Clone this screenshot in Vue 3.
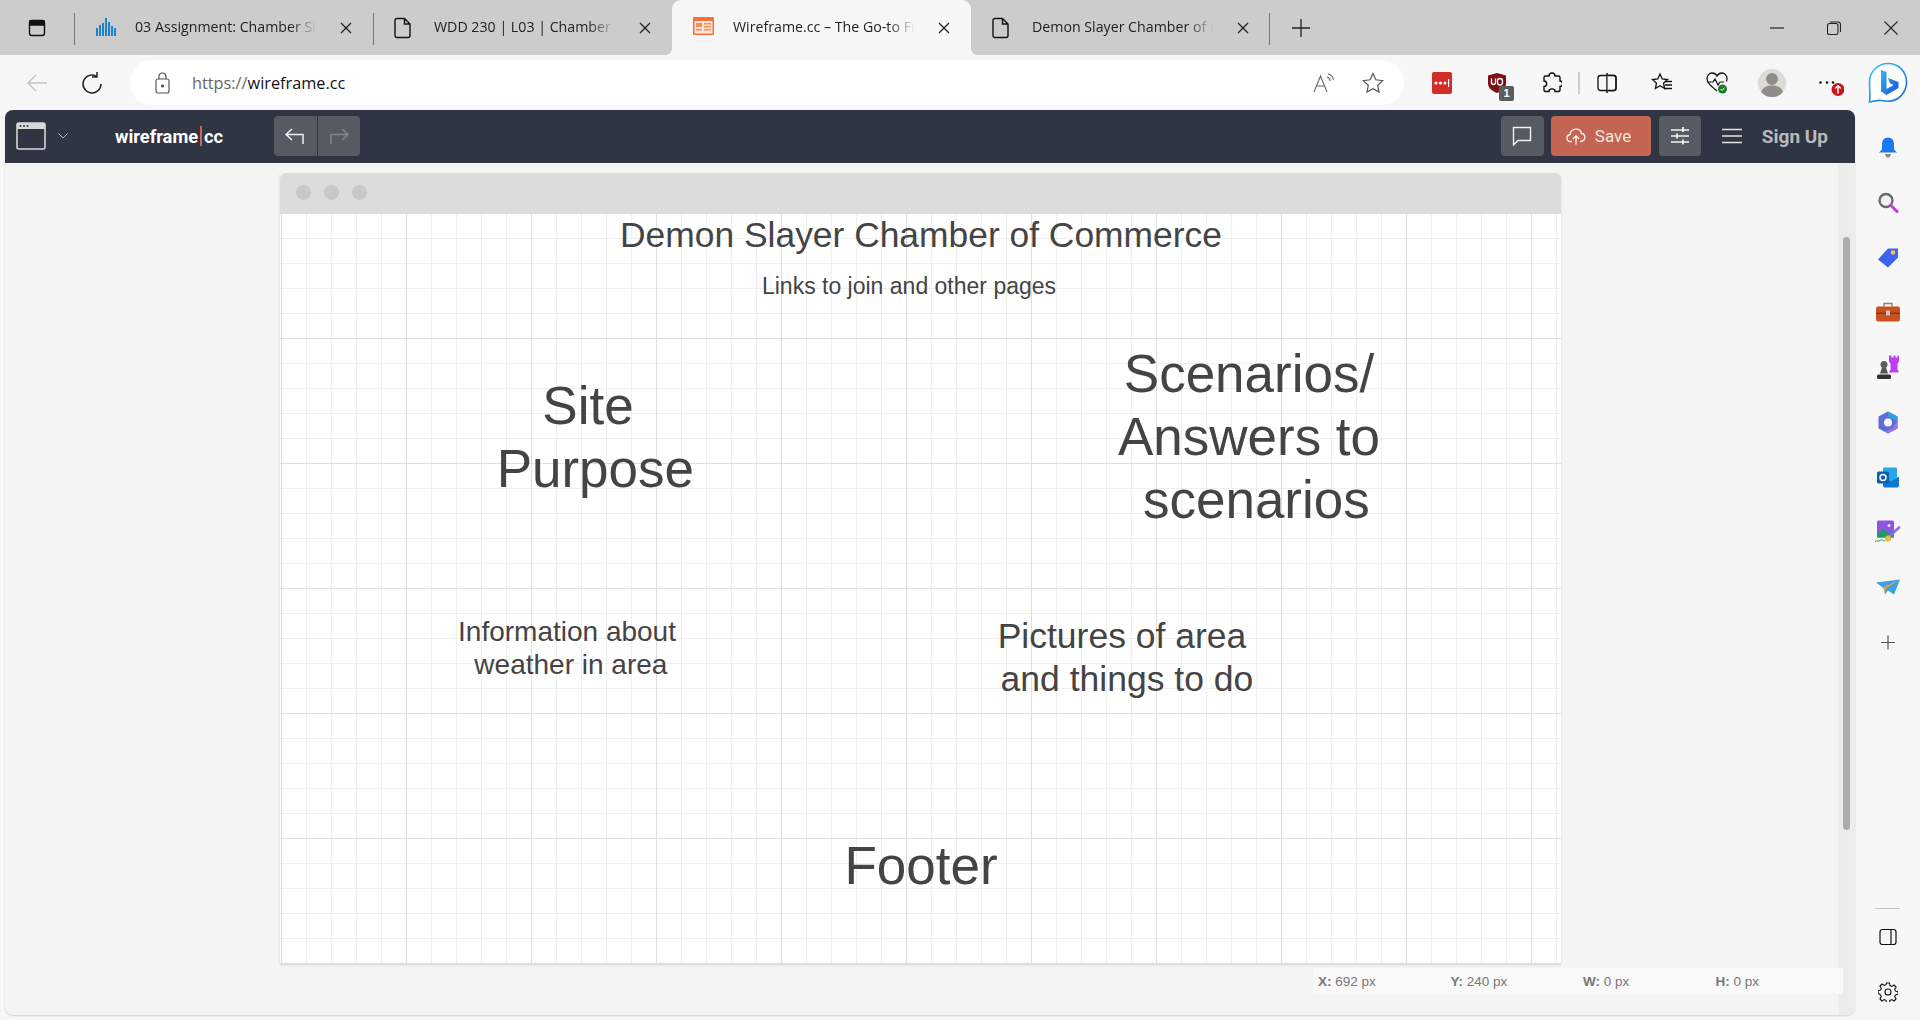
<script setup>
const canvasTexts = [
  { id: 'title', cls: 't-title', lines: ['Demon Slayer Chamber of Commerce'] },
  { id: 'links', cls: 't-links', lines: ['Links to join and other pages'] },
  { id: 'site', cls: 't-site', lines: ['Site', ' Purpose'] },
  { id: 'scen', cls: 't-scen', lines: ['Scenarios/', 'Answers to', ' scenarios'] },
  { id: 'info', cls: 't-info', lines: ['Information about', ' weather in area'] },
  { id: 'pics', cls: 't-pics', lines: ['Pictures of area', ' and things to do'] },
  { id: 'foot', cls: 't-foot', lines: ['Footer'] },
]
const stats = [
  { k: 'X:', v: '692 px' },
  { k: 'Y:', v: '240 px' },
  { k: 'W:', v: '0 px' },
  { k: 'H:', v: '0 px' },
]
</script>

<template>
  <div class="screen">
    <!-- browser tabs -->
    <div class="tabbar">
      <div class="tab-start">
        <svg width="20" height="20" viewBox="0 0 20 20" fill="none" stroke="#111" stroke-width="1.4"><rect x="2.500" y="2.500" width="15" height="15" rx="2.500"/><path d="M3 3h14v4H3z" fill="#111"/></svg>
      </div>
      <div class="tab">
        <svg class="fav" width="22" height="20" viewBox="0 0 22 20" fill="#1a84d0"><path d="M1 11h2v8H1zM4 8h2v11H4zM7 6h2v13H7zM10 1h2v18h-2zM13 5h2v14h-2zM16 9h2v10h-2zM19 11h2v8h-2z"/></svg>
        <span class="tab-text">03 Assignment: Chamber Site Plan</span>
        <svg class="close" width="14" height="14" viewBox="0 0 14 14" stroke="#222" stroke-width="1.3"><path d="M2 2l10 10M12 2L2 12"/></svg>
      </div>
      <div class="tab">
        <svg class="fav" width="18" height="22" viewBox="0 0 18 22" fill="none" stroke="#111" stroke-width="1.4"><path d="M3 1.500h7.500L16 7v11.500a2 2 0 0 1-2 2H3a2 2 0 0 1-2-2v-15a2 2 0 0 1 2-2zM10.500 1.500V7H16"/></svg>
        <span class="tab-text">WDD 230 | L03 | Chamber Site Plan</span>
        <svg class="close" width="14" height="14" viewBox="0 0 14 14" stroke="#222" stroke-width="1.3"><path d="M2 2l10 10M12 2L2 12"/></svg>
      </div>
      <div class="tab active">
        <svg class="fav" width="21" height="18" viewBox="0 0 21 18"><rect width="21" height="18" rx="1" fill="#f4713a"/><rect x="1.500" y="4" width="18" height="12.500" fill="#fde3d6"/><path d="M3 6h6v4H3zM11 6h7v1.500h-7zM11 9h7v1.500h-7zM3 12h6v1.500H3zM11 12h7v1.500h-7z" fill="#f4915f"/></svg>
        <span class="tab-text">Wireframe.cc – The Go-to Free</span>
        <svg class="close" width="14" height="14" viewBox="0 0 14 14" stroke="#222" stroke-width="1.3"><path d="M2 2l10 10M12 2L2 12"/></svg>
      </div>
      <div class="tab last">
        <svg class="fav" width="18" height="22" viewBox="0 0 18 22" fill="none" stroke="#111" stroke-width="1.4"><path d="M3 1.500h7.500L16 7v11.500a2 2 0 0 1-2 2H3a2 2 0 0 1-2-2v-15a2 2 0 0 1 2-2zM10.500 1.500V7H16"/></svg>
        <span class="tab-text">Demon Slayer Chamber of Commerce</span>
        <svg class="close" width="14" height="14" viewBox="0 0 14 14" stroke="#222" stroke-width="1.3"><path d="M2 2l10 10M12 2L2 12"/></svg>
      </div>
      <svg class="newtab" width="18" height="18" viewBox="0 0 18 18" stroke="#222" stroke-width="1.3"><path d="M9 0v18M0 9h18"/></svg>
      <div class="winctl">
        <svg width="14" height="14" viewBox="0 0 14 14" stroke="#222" stroke-width="1.2"><path d="M0 7h14"/></svg>
        <svg width="14" height="14" viewBox="0 0 14 14" fill="none" stroke="#222" stroke-width="1.1"><rect x="0.500" y="2.500" width="10.500" height="11" rx="2"/><path d="M3 1h8a2.500 2.500 0 0 1 2.500 2.500V11"/></svg>
        <svg width="14" height="14" viewBox="0 0 14 14" stroke="#222" stroke-width="1.1"><path d="M0.500 0.500l13 13M13.500 0.500l-13 13"/></svg>
      </div>
    </div>

    <!-- address bar -->
    <div class="toolbar">
      <svg class="t-back" width="22" height="20" viewBox="0 0 22 20" fill="none" stroke="#c4c4c4" stroke-width="1.5"><path d="M21 10H2M10 2l-8 8 8 8"/></svg>
      <svg class="t-reload" width="22" height="24" viewBox="0 0 22 24" fill="none" stroke="#222" stroke-width="1.5"><path d="M16 5.500A9 9 0 1 0 20 13M16 1v5h-5"/></svg>
      <div class="addr">
        <svg width="15" height="22" viewBox="0 0 15 22" fill="none" stroke="#555" stroke-width="1.2"><rect x="1" y="7" width="13" height="14" rx="2"/><path d="M4 7V4.500a3.500 3.500 0 0 1 7 0V7"/><circle cx="7.500" cy="14" r="1" fill="#555"/></svg>
        <span class="url"><span class="url-dim">https://</span>wireframe.cc</span>
        <span class="addr-spacer"></span>
        <svg class="ic-read" width="22" height="20" viewBox="0 0 22 20" fill="none" stroke="#666" stroke-width="1.1"><path d="M1 19L7.500 3 14 19M3.500 13h8M14 4c2 .5 3 2 3.200 4M15 1c3 .6 5 3 5.300 6"/></svg>
        <svg class="ic-star" width="22" height="22" viewBox="0 0 22 22" fill="none" stroke="#555" stroke-width="1.2"><path d="M11 1.500l2.900 6.300 6.800.8-5 4.700 1.300 6.800L11 16.800l-6 3.300 1.300-6.800-5-4.700 6.800-.8z"/></svg>
      </div>
      <div class="ext">
        <span class="ext-slot">
          <svg width="20" height="22" viewBox="0 0 20 22"><rect width="20" height="22" rx="2" fill="#d32d27"/><circle cx="4" cy="11" r="1.600" fill="#fff"/><circle cx="8.500" cy="11" r="1.600" fill="#fff"/><circle cx="13" cy="11" r="1.600" fill="#fff"/><rect x="16" y="7" width="1.200" height="8" fill="#fff"/></svg>
        </span>
        <span class="ext-slot">
          <svg width="18" height="20" viewBox="0 0 18 20"><path d="M9 0l9 2.500v8c0 4.500-4 7.500-9 9.500-5-2-9-5-9-9.500v-8z" fill="#800f14"/><path d="M3.500 5.500v4a2 2 0 0 0 4 0v-4M12 5.500a2.500 2.500 0 0 1 2.500 2.500v1.500a2.500 2.500 0 0 1-5 0V8A2.500 2.500 0 0 1 12 5.500z" fill="none" stroke="#fff" stroke-width="1.300"/></svg>
          <span class="ub-badge">1</span>
        </span>
        <span class="ext-slot">
          <svg width="20" height="22" viewBox="0 0 20 22" fill="none" stroke="#111" stroke-width="1.400"><path d="M7 4c0-4 6-4 6 0h3.500a1.500 1.500 0 0 1 1.500 1.500V9c3.500 0 3.500 5.500 0 5.500V18a1.500 1.500 0 0 1-1.500 1.500H13c0-3.500-6-3.500-6 0H3.500A1.500 1.500 0 0 1 2 18v-3.500c3.500 0 3.500-5.500 0-5.500V5.500A1.500 1.500 0 0 1 3.500 4z"/></svg>
        </span>
        <i class="ext-div"></i>
        <span class="ext-slot">
          <svg width="20" height="22" viewBox="0 0 20 22" fill="none" stroke="#111" stroke-width="1.300"><rect x="1" y="3.500" width="18" height="15" rx="2.500"/><path d="M10 1v20" stroke-width="1.500"/><path d="M10.700 4h6v14h-6z" fill="#f7f7f7" stroke="none"/><path d="M11 3.500h6a2 2 0 0 1 2 2v11a2 2 0 0 1-2 2h-6"/></svg>
        </span>
        <span class="ext-slot">
          <svg width="22" height="22" viewBox="0 0 22 22" fill="none" stroke="#111" stroke-width="1.300"><path d="M9 2l2.200 5 5.300.6-4 3.600 1.100 5.300L9 13.800l-4.600 2.700 1.100-5.300-4-3.600L6.800 7z"/><path d="M14 9.500h7M14 13h7M13 16.500h8"/></svg>
        </span>
        <span class="ext-slot">
          <svg width="22" height="24" viewBox="0 0 22 24" fill="none"><path d="M11 20C5 15 1 12 1 7.500 1 4.500 3.400 2 6 2c2 0 4 1 5 3 1-2 3-3 5-3 2.600 0 5 2.500 5 5.500 0 1-.2 2-.6 3" stroke="#111" stroke-width="1.300"/><path d="M2 11h5l2-3 3 6 2-3h4" stroke="#111" stroke-width="1.200"/><circle cx="16.500" cy="18" r="4.500" fill="#187a2a"/><path d="M14.500 18l1.500 1.500 2.500-2.800" stroke="#fff" stroke-width="1"/></svg>
        </span>
        <span class="ext-slot">
          <svg width="28" height="32" viewBox="0 0 28 32"><circle cx="14" cy="16" r="14" fill="#dcdbd7"/><circle cx="14" cy="12" r="6" fill="#8f8d8a"/><path d="M3 25c2-5 6-6.500 11-6.500S23 20 25 25c-2.500 3-6.500 5-11 5s-8.500-2-11-5z" fill="#8f8d8a"/></svg>
        </span>
        <span class="ext-slot">
          <svg width="34" height="26" viewBox="0 0 34 26"><circle cx="10.500" cy="12.500" r="1.300" fill="#111"/><circle cx="17" cy="12.500" r="1.300" fill="#111"/><circle cx="23" cy="12.500" r="1.300" fill="#111"/><circle cx="28" cy="19.500" r="6.500" fill="#c4161c"/><path d="M28 23.500V16M25.200 18.500L28 15.800l2.800 2.700" fill="none" stroke="#fff" stroke-width="1.400"/></svg>
        </span>
      </div>
      <svg class="bing" width="40" height="42" viewBox="0 0 40 42">
        <defs>
          <linearGradient id="bing-ring" x1="0" y1="0" x2="1" y2="1"><stop offset="0" stop-color="#32c5f0"/><stop offset="1" stop-color="#1a62e0"/></linearGradient>
          <linearGradient id="bing-b" x1="0" y1="0" x2="1" y2="1"><stop offset="0" stop-color="#35b6f2"/><stop offset="1" stop-color="#1c50d8"/></linearGradient>
        </defs>
        <path d="M20 1.500C9.500 1.500 1.500 10 1.500 20c0 7 1 14 0 20 4-1 8-2 12-1.500 2 .5 4 .8 6.500.8 10.500 0 18.500-8.800 18.500-19.300S30.500 1.500 20 1.500z" fill="#fff" stroke="url(#bing-ring)" stroke-width="1.600"/>
        <path d="M13 8l5.500 2v17l7-4-3.500-1.800-2-5.200 10.500 4v6L18.500 33 13 29.500z" fill="url(#bing-b)"/>
      </svg>
    </div>

    <div class="main">
      <div class="app">
        <!-- wireframe.cc header -->
        <header class="hdr">
          <svg class="hdr-logo" width="30" height="28" viewBox="0 0 30 28" fill="none"><rect x="1" y="1" width="28" height="26" rx="2" stroke="#d8d8d8" stroke-width="1.600"/><path d="M1 3a2 2 0 0 1 2-2h24a2 2 0 0 1 2 2v4H1z" fill="#d8d8d8"/><circle cx="4.500" cy="4" r="1" fill="#2f3542"/><circle cx="8" cy="4" r="1" fill="#2f3542"/><circle cx="11.500" cy="4" r="1" fill="#2f3542"/></svg>
          <svg class="hdr-chev" width="10" height="6" viewBox="0 0 10 6" fill="none" stroke="#b5b7bc" stroke-width="1"><path d="M0.500 0.500L5 5l4.500-4.500"/></svg>
          <span class="brand">wireframe<i class="brand-bar"></i>cc</span>
          <div class="hist">
            <button class="hist-btn">
              <svg width="20" height="16" viewBox="0 0 20 16" fill="none" stroke="#f2f2f2" stroke-width="1.500"><path d="M7 1L1 6.500 7 12M1 6.500h17V16"/></svg>
            </button>
            <button class="hist-btn">
              <svg width="20" height="16" viewBox="0 0 20 16" fill="none" stroke="#85878d" stroke-width="1.500"><path d="M13 1l6 5.500L13 12M19 6.500H2V16"/></svg>
            </button>
          </div>
          <span class="hdr-spacer"></span>
          <button class="h-btn comment">
            <svg width="20" height="20" viewBox="0 0 20 20" fill="none" stroke="#f2f2f2" stroke-width="1.400"><path d="M1.500 1.500h17v13H6L1.500 19z"/></svg>
          </button>
          <button class="h-btn save">
            <svg width="20" height="18" viewBox="0 0 20 18" fill="none" stroke="#fbeeea" stroke-width="1.400"><path d="M6 14.500H4.500C0 14.500 0 8 4 7.500 5 1 14 0 15.500 6.500c4-.2 5 7-.5 8h-1M10 17.500V9M6.800 12L10 8.800l3.200 3.200"/></svg>
            <span>Save</span>
          </button>
          <button class="h-btn tune">
            <svg width="18" height="20" viewBox="0 0 18 20" stroke="#f2f2f2" stroke-width="1.500"><path d="M0 4h18M0 10h18M0 16h18"/><path d="M12 1v5M6 7.500v5M12 13.500v5" stroke-width="1.800"/></svg>
          </button>
          <svg class="burger" width="20" height="16" viewBox="0 0 20 16" stroke="#e5e5e5" stroke-width="1.600"><path d="M0 1.500h20M0 8h20M0 14.500h20"/></svg>
          <span class="signup">Sign Up</span>
        </header>

        <div class="body">
          <div class="work">
            <div class="sheet">
              <div class="sheet-bar">
                <i class="dot"></i><i class="dot"></i><i class="dot"></i>
              </div>
              <div class="grid">
                <div v-for="t in canvasTexts" :key="t.id" class="note" :class="t.cls">
                  <div v-for="(l, i) in t.lines" :key="i">{{ l }}</div>
                </div>
              </div>
            </div>
            <div class="status">
              <span v-for="s in stats" :key="s.k" class="stat"><b>{{ s.k }}</b> {{ s.v }}</span>
            </div>
          </div>
          <div class="track"><div class="thumb"></div></div>
        </div>
      </div>

      <!-- edge sidebar -->
      <aside class="side">
        <div class="side-top">
          <svg width="20" height="20" viewBox="0 0 20 20"><path d="M10 0c4 0 6 3 6 7v5l3 3H1l3-3V7c0-4 2-7 6-7z" fill="#1a78f2"/><path d="M7 16.500h6L11.500 20h-3z" fill="#8a8a8a"/></svg>
          <svg width="22" height="22" viewBox="0 0 22 22" fill="none"><circle cx="9" cy="9" r="6.500" stroke="#6a6a6a" stroke-width="2.400" fill="#eef2f6"/><path d="M14 14l6 6" stroke="#c23bd6" stroke-width="3" stroke-linecap="round"/></svg>
          <svg width="22" height="20" viewBox="0 0 22 20"><path d="M11 1h10v9L11 20 1 12z" fill="#3f62f0"/><circle cx="16" cy="5" r="2.200" fill="#f5c84a"/></svg>
          <svg width="24" height="20" viewBox="0 0 24 20"><path d="M8 4V1h8v3" fill="none" stroke="#9a7f6f" stroke-width="1.500"/><rect y="4" width="24" height="15" rx="2" fill="#c9501f"/><rect y="10" width="24" height="1.500" fill="#8e3512"/><rect x="10" y="8" width="4" height="5" fill="#c5c5c5"/></svg>
          <svg width="24" height="24" viewBox="0 0 24 24"><path d="M13 0h2.500v2h2V0h2v2h2V0H23v6l-1.500 2v6L23 17H13l1.500-3V8L13 6z" fill="#b93ff0"/><circle cx="8" cy="9" r="3.500" fill="#5c5c5c"/><path d="M6 12h4l2 6H4z" fill="#555"/><rect x="1" y="19" width="14" height="4.500" rx="1.500" fill="#333"/></svg>
          <svg width="22" height="22" viewBox="0 0 22 22"><path d="M11 0l9.500 5v12L11 22l-9.500-5V5z" fill="#5c6fd8"/><path d="M11 0l9.500 5v5l-5-2.500L11 5z" fill="#3d9bd8"/><path d="M20.500 10v7L11 22l-3-2 7-3z" fill="#a773d8"/><circle cx="11" cy="11" r="4" fill="#f7f7f7"/></svg>
          <svg width="22" height="20" viewBox="0 0 22 20"><rect x="6" y="0" width="14" height="18" rx="1" fill="#28a8ea"/><path d="M6 9l8 5 8-5v9a2 2 0 0 1-2 2H8a2 2 0 0 1-2-2z" fill="#0f78d4"/><rect y="4" width="12" height="12" rx="1.500" fill="#0a5fb0"/><circle cx="6" cy="10" r="3" fill="none" stroke="#fff" stroke-width="1.500"/></svg>
          <svg width="26" height="24" viewBox="0 0 26 24"><rect x="2" y="0" width="17" height="17" rx="1.500" fill="#8f54e0"/><path d="M2 14l6-6 5 5 4-2 2 2v4H2z" fill="#1f9a6a"/><circle cx="14" cy="5" r="1.500" fill="#e9dcff"/><path d="M12 18L24 7" stroke="#8a6ce8" stroke-width="2.600" stroke-linecap="round"/><circle cx="13" cy="18" r="3" fill="#f2b632"/><path d="M0 21c2-2 3 1 5-1s3 1 5 0" fill="none" stroke="#1f8a4a" stroke-width="1"/></svg>
          <svg width="24" height="16" viewBox="0 0 24 16"><path d="M0 3l24-3-6 15-6-4-3 4-1-6z" fill="#3aa0ea"/><path d="M7 8L24 0 10 9l-1 5z" fill="#f0a21e"/></svg>
          <svg width="14" height="14" viewBox="0 0 14 14" stroke="#555" stroke-width="1.200"><path d="M7 0v14M0 7h14"/></svg>
        </div>
        <div class="side-bottom">
          <i class="side-div"></i>
          <svg class="side-panel" width="18" height="18" viewBox="0 0 18 18" fill="none" stroke="#111" stroke-width="1.200"><rect x="1" y="1.500" width="16" height="15" rx="2.500"/><path d="M12 1.500v15"/></svg>
          <svg class="side-gear" width="20" height="20" viewBox="0 0 20 20" fill="none" stroke="#111" stroke-width="1.100"><circle cx="10" cy="10" r="3"/><path d="M8.500 1h3l.5 2.600 1.800.8 2.300-1.400 2 2.100-1.400 2.200.8 1.800 2.500.6v2.600l-2.500.6-.8 1.800 1.400 2.200-2 2.100-2.300-1.400-1.800.8-.5 2.600h-3l-.5-2.600-1.800-.8-2.300 1.400-2-2.100 1.400-2.200-.8-1.800L0 11.300V8.700l2.500-.6.800-1.800L1.900 4.100l2-2.100 2.300 1.400L8 2.600z"/></svg>
        </div>
      </aside>
    </div>
  </div>
</template>

<style scoped>
.screen {
  width: 1920px;
  height: 1020px;
  display: flex;
  flex-direction: column;
  overflow: hidden;
  background: #f7f7f7;
  font-family: "Open Sans", "Noto Sans", sans-serif;
}

/* tabs */
.tabbar {
  height: 55px;
  flex: none;
  display: flex;
  align-items: center;
  background: #cccccc;
}
.tab-start {
  width: 74px;
  height: 100%;
  display: flex;
  align-items: center;
  justify-content: center;
}
.tab {
  width: 299px;
  height: 55px;
  flex: none;
  position: relative;
  display: flex;
  align-items: center;
}
.tab::before {
  content: "";
  position: absolute;
  left: 0;
  top: 13px;
  height: 32px;
  width: 1px;
  background: #777;
}
.tab.active {
  background: #f7f7f7;
  border-radius: 9px 9px 0 0;
}
.tab.active + .tab::before {
  display: none;
}
.tab.active::before,
.tab.active::after {
  content: "";
  position: absolute;
  bottom: 0;
  top: auto;
  width: 6px;
  height: 6px;
  background: radial-gradient(circle at 0 0, transparent 5.500px, #f7f7f7 6px);
}
.tab.active::before {
  left: -6px;
}
.tab.active::after {
  right: -6px;
  background: radial-gradient(circle at 100% 0, transparent 5.500px, #f7f7f7 6px);
}
.tab.last::after {
  content: "";
  position: absolute;
  left: 298px;
  top: 13px;
  height: 32px;
  width: 1px;
  background: #777;
}
.fav {
  position: absolute;
  left: 21px;
  top: 17px;
}
.tab-text {
  position: absolute;
  left: 61px;
  top: 17px;
  width: 182px;
  overflow: hidden;
  white-space: nowrap;
  font-size: 14.200px;
  line-height: 20px;
  color: #222;
  -webkit-mask-image: linear-gradient(to right, #000 85%, transparent 100%);
  mask-image: linear-gradient(to right, #000 85%, transparent 100%);
}
.close {
  position: absolute;
  left: 265px;
  top: 21px;
}
.newtab {
  margin-left: 22px;
}
.winctl {
  margin-left: auto;
  display: flex;
  gap: 43px;
  padding-right: 22px;
}

/* address bar */
.toolbar {
  height: 55px;
  flex: none;
  display: flex;
  align-items: center;
  background: #f7f7f7;
}
.t-back {
  margin-left: 26px;
}
.t-reload {
  margin-left: 33px;
}
.addr {
  width: 1274px;
  height: 45px;
  margin-left: 27px;
  border-radius: 23px;
  background: #fff;
  display: flex;
  align-items: center;
  padding: 0 20px 0 25px;
  box-sizing: border-box;
}
.url {
  margin-left: 22px;
  font-size: 16.300px;
  color: #111;
}
.url-dim {
  color: #666;
}
.addr-spacer {
  flex: 1;
}
.ic-star {
  margin-left: 27px;
}
.ext {
  display: flex;
  align-items: center;
  margin-left: 10px;
}
.ext-slot {
  width: 55px;
  height: 40px;
  flex: none;
  display: flex;
  align-items: center;
  justify-content: center;
  position: relative;
}
.ub-badge {
  position: absolute;
  left: 30px;
  top: 23px;
  width: 15px;
  height: 15px;
  border-radius: 2px;
  background: #5c5c5c;
  color: #fff;
  font-family: "Liberation Sans", Arial, sans-serif;
  font-size: 11px;
  line-height: 15px;
  font-weight: 700;
  text-align: center;
}
.ext-div {
  width: 2px;
  height: 22px;
  background: #ccc;
  margin: 0 -1px;
}
.bing {
  margin-left: 14px;
}

/* body */
.main {
  flex: 1;
  display: flex;
  min-height: 0;
}
.app {
  width: 1850px;
  margin-left: 5px;
  flex: none;
  display: flex;
  flex-direction: column;
  margin-bottom: 5px;
  border-radius: 8px;
  background: #f4f4f4;
  box-shadow: 0 1px 2px rgba(0, 0, 0, 0.15);
  overflow: hidden;
}
.hdr {
  height: 53px;
  flex: none;
  display: flex;
  align-items: center;
  box-sizing: border-box;
  padding-bottom: 1px;
  background: #2f3542;
}
.hdr-logo {
  margin-left: 11px;
}
.hdr-chev {
  margin-left: 12px;
}
.brand {
  margin-left: 47px;
  font-family: Roboto, "Liberation Sans", sans-serif;
  font-weight: 700;
  font-size: 18.300px;
  color: #fff;
  display: flex;
  align-items: center;
}
.brand-bar {
  width: 2px;
  height: 20px;
  margin: 0 2px;
  background: #d9634a;
}
.hist {
  margin-left: 51px;
  display: flex;
  gap: 1px;
  background: #2f3542;
  border-radius: 4px;
  overflow: hidden;
}
.hist-btn {
  width: 42.500px;
  height: 40px;
  padding: 0;
  border: 0;
  background: #565a63;
  display: flex;
  align-items: center;
  justify-content: center;
}
.hdr-spacer {
  flex: 1;
}
.h-btn {
  height: 40px;
  padding: 0;
  border: 0;
  border-radius: 4px;
  background: #565a63;
  display: flex;
  align-items: center;
  justify-content: center;
}
.comment {
  width: 43px;
}
.save {
  width: 100px;
  margin-left: 7px;
  padding-left: 15px;
  justify-content: flex-start;
  background: #c46452;
  color: #f6e4df;
  font-family: Roboto, "Liberation Sans", sans-serif;
  font-size: 17px;
  gap: 9px;
}
.tune {
  width: 42px;
  margin-left: 8px;
}
.burger {
  margin-left: 21px;
}
.signup {
  margin-left: 20px;
  margin-right: 27px;
  font-family: Roboto, "Liberation Sans", sans-serif;
  font-weight: 700;
  font-size: 19px;
  color: #b9babd;
}
.body {
  flex: 1;
  display: flex;
  min-height: 0;
}
.work {
  flex: 1;
  min-width: 0;
  padding: 10px 0 0 275px;
  box-sizing: border-box;
}
.sheet {
  width: 1281px;
  box-shadow: 0 1px 2px rgba(0, 0, 0, 0.12);
}
.sheet-bar {
  height: 40px;
  box-sizing: border-box;
  padding: 0 0 1px 16px;
  background: #dcdcdc;
  border-radius: 6px 6px 0 0;
  display: flex;
  align-items: center;
  gap: 13px;
}
.dot {
  width: 15px;
  height: 15px;
  border-radius: 50%;
  background: #c8c8c8;
}
.grid {
  position: relative;
  height: 751px;
  background-color: #fff;
  background-image:
    linear-gradient(to right, #dedede 1px, transparent 1px),
    linear-gradient(to bottom, #dedede 1px, transparent 1px),
    linear-gradient(to right, #efefef 1px, transparent 1px),
    linear-gradient(to bottom, #efefef 1px, transparent 1px);
  background-size: 125px 125px, 125px 125px, 25px 25px, 25px 25px;
  background-position: 1px 0, 0 0, 1px 0, 0 0;
  font-family: "Liberation Sans", Arial, sans-serif;
  color: #444;
}
.note {
  position: absolute;
  white-space: pre;
  text-align: center;
}
.t-title { left: 241px; top: 0; width: 800px; font-size: 35.400px; line-height: 44px; }
.t-links { left: 329px; top: 59px; width: 600px; font-size: 23px; line-height: 29px; }
.t-site { left: 8px; top: 161px; width: 600px; font-size: 53px; line-height: 63px; }
.t-scen { left: 669px; top: 129px; width: 600px; font-size: 53px; line-height: 63px; }
.t-info { left: -13px; top: 402px; width: 600px; font-size: 28px; line-height: 33px; }
.t-pics { left: 542px; top: 402px; width: 600px; font-size: 35.500px; line-height: 42.500px; }
.t-foot { left: 341px; top: 621px; width: 600px; font-size: 53px; line-height: 64px; }
.status {
  position: relative;
  z-index: 1;
  margin: 4px 0 0 1033px;
  width: 530px;
  height: 26px;
  background: #f9f9f9;
  display: flex;
  align-items: center;
  padding-left: 5px;
  box-sizing: border-box;
  font-family: "Liberation Sans", Arial, sans-serif;
  font-size: 13.500px;
  color: #777;
}
.stat {
  width: 132.500px;
  flex: none;
}
.track {
  width: 17px;
  flex: none;
  background: #ececec;
}
.thumb {
  width: 7px;
  height: 593px;
  margin: 74px 0 0 5px;
  border-radius: 4px;
  background: #ababab;
}

/* sidebar */
.side {
  flex: 1;
  display: flex;
  flex-direction: column;
  align-items: center;
  justify-content: space-between;
  padding-bottom: 18px;
}
.side-top {
  display: flex;
  flex-direction: column;
  align-items: center;
  padding-top: 10px;
}
.side-top svg {
  height: 55px;
  flex: none;
}
.side-bottom {
  display: flex;
  flex-direction: column;
  align-items: center;
}
.side-div {
  width: 25px;
  height: 1px;
  background: #c4c4c4;
  margin-bottom: 19px;
}
.side-gear {
  margin-top: 36px;
}
</style>
